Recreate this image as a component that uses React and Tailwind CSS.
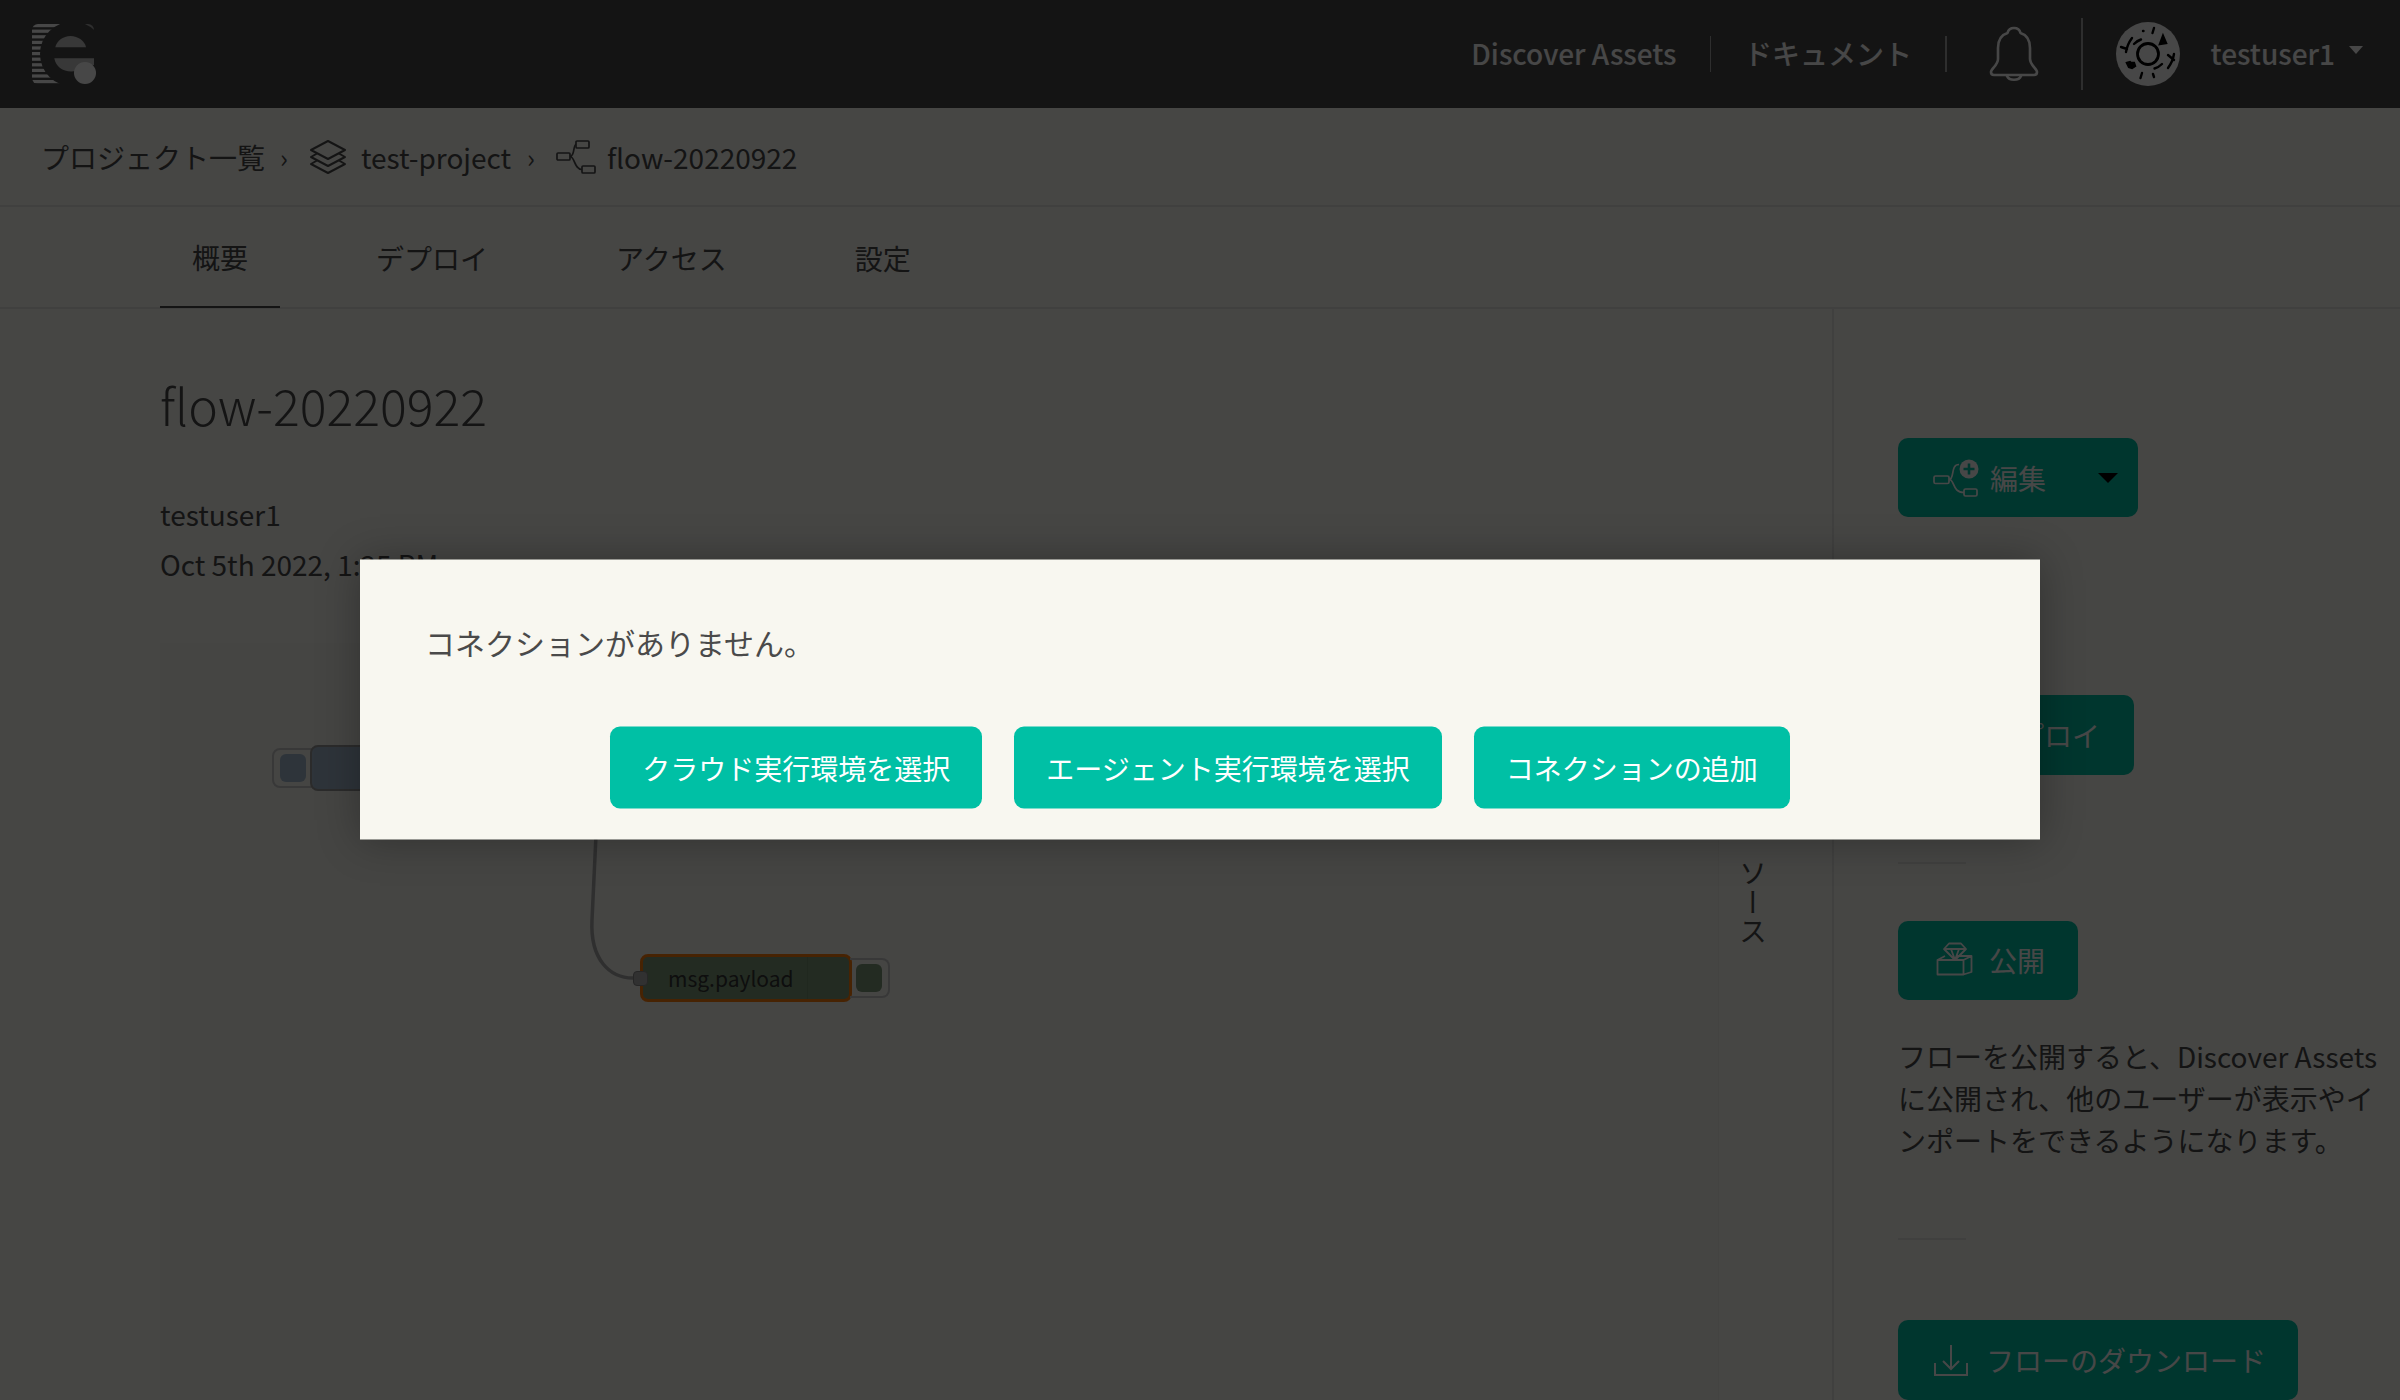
import React from "react";

function FlowIcon({ className }) {
  return (
    <svg className={className} viewBox="0 0 40 34" fill="none" stroke="currentColor" strokeWidth="1.700">
      <rect x="1" y="13" width="13" height="7" rx="1" />
      <rect x="20" y="1" width="13" height="7" rx="1" />
      <rect x="26" y="26" width="13" height="7" rx="1" />
      <path d="M14 16.500c5 0 3-12 6-12M14 16.500c5 0 4 13 12 13" />
    </svg>
  );
}

function LayersIcon({ className }) {
  return (
    <svg className={className} viewBox="0 0 38 36" fill="none" stroke="currentColor" strokeWidth="2" strokeLinejoin="round">
      <path d="M19 2 36 11 19 20 2 11Z" />
      <path d="M8 14.500 2 18l17 9 17-9-6-3.500" />
      <path d="M8 21.500 2 25l17 9 17-9-6-3.500" />
    </svg>
  );
}

function Logo() {
  const stripes = [24, 29.6, 35.2, 40.8, 46.4, 52, 57.6, 63.2, 68.8, 74.4, 80];
  return (
    <svg className="h-[64px] w-[68px]" viewBox="30 22 68 64">
      <defs>
        <clipPath id="logoClip">
          <rect x="32" y="24" width="62" height="60" rx="6" />
        </clipPath>
      </defs>
      <g clipPath="url(#logoClip)">
        {stripes.map((y) => (
          <rect key={y} x="32" y={y} width="40" height="3.2" fill="#fff" />
        ))}
        <rect x="78" y="24" width="16" height="14" fill="#a8a8a8" />
      </g>
      <circle cx="72.5" cy="54" r="32.5" fill="#4a4a4a" />
      <path d="M55.3 47.3C56.5 41 63 36 70.5 36s14.500 5 15.500 11.300Z" fill="#c8c8c8" />
      <path d="M54.300 58.300H94V65H85L76 71C65 73 56 68 54.300 58.300Z" fill="#c8c8c8" />
      <circle cx="85" cy="73" r="11" fill="#fff" />
    </svg>
  );
}

function Bell() {
  return (
    <svg className="h-[58px] w-[52px]" viewBox="0 0 52 58" fill="none" stroke="#fff" strokeWidth="2.6" strokeLinejoin="round" strokeLinecap="round">
      <path d="M26 3c-4 0-6 3-6.500 5C13 10 10 16 10 23v11c0 6-7 10-7 13 0 2 1 3 3 3h40c2 0 3-1 3-3 0-3-7-7-7-13V23c0-7-3-13-9.500-15C32 6 30 3 26 3Z" />
      <path d="M19 51c2 5 12 5 14 0" />
    </svg>
  );
}

function Avatar() {
  return (
    <svg className="h-[64px] w-[64px]" viewBox="0 0 64 64" fill="none" stroke="#000" strokeWidth="2.4" strokeLinecap="round">
      <circle cx="32" cy="32" r="32" fill="#fff" stroke="none" />
      <circle cx="32" cy="32" r="10.500" strokeWidth="2.800" />
      <path d="M18 22c2-2 4-3.500 7-4.500M46 42c-2 2-4 3.500-7.500 4.500" />
      <path d="M16 16c-3 4-5 8-6 14M5 25l6 2M58 32c-1 6-3 10-6 14M52 33l6 5" />
      <path d="M27 9h.5M38 6l-1.500 5M26 51l-1.500 5M37 52l1 3" />
      <path d="M47 14l-3 8 6-1Z" fill="#000" />
      <path d="M11 41l3-1 1 1 3 0 1 3-3 2-3-1Z" fill="#000" />
    </svg>
  );
}

function PrimaryButton({ children, className = "" }) {
  return (
    <button className={`flex h-[80px] items-center rounded-[10px] bg-[#00c0a5] text-white ${className}`}>
      {children}
    </button>
  );
}

export default function App() {
  return (
    <div className="relative h-screen w-screen overflow-hidden bg-[#f9f9f4] text-[28px] text-[#4a4a4a] [font-family:'Noto_Sans_CJK_JP','Noto_Sans',sans-serif]">
      <header className="flex h-[108px] items-center justify-between bg-[#4a4a4a] pl-[30px] pr-[37px] text-white">
        <Logo />
        <div className="flex items-center">
          <a className="mb-[3px] font-medium">Discover Assets</a>
          <span className="mx-[33px] h-[36px] w-[1.500px] bg-white/50" />
          <a className="mb-[3px] font-medium">ドキュメント</a>
          <span className="ml-[33px] mr-[41px] h-[36px] w-[1.500px] bg-white/50" />
          <Bell />
          <span className="ml-[41px] mr-[33px] h-[72px] w-[2px] bg-white/50" />
          <Avatar />
          <span className="mb-[3px] ml-[31px] font-medium">testuser1</span>
          <span className="mb-[8px] ml-[14px] h-0 w-0 border-x-[7.500px] border-t-[8px] border-x-transparent border-t-white" />
        </div>
      </header>

      <nav className="flex h-[99px] items-center border-b-2 border-[#e6e6e0] pl-[41px]">
        <a>プロジェクト一覧</a>
        <span className="ml-[15px] mr-[21px] text-[26px]">›</span>
        <LayersIcon className="h-[36px] w-[38px]" />
        <a className="ml-[14px]">test-project</a>
        <span className="ml-[16px] mr-[21px] text-[26px]">›</span>
        <FlowIcon className="h-[34px] w-[40px]" />
        <a className="ml-[11px]">flow-20220922</a>
      </nav>

      <div className="flex h-[102px] gap-[64px] border-b-2 border-[#e6e6e0] pl-[160px]">
        <a className="flex h-[101px] items-center border-b-2 border-[#4a4a4a] px-[32px]">概要</a>
        <a className="flex h-[101px] items-center px-[32px]">デプロイ</a>
        <a className="flex h-[101px] items-center px-[32px]">アクセス</a>
        <a className="flex h-[101px] items-center px-[32px]">設定</a>
      </div>

      <div className="flex h-[1091px]">
        <section className="flex w-[1834px] flex-col border-r-2 border-[#e6e6e0] pl-[160px]">
          <h1 className="mt-[59px] text-[50px] font-light leading-[72px]">flow-20220922</h1>
          <p className="mt-[49px] leading-[50px]">testuser1</p>
          <p className="leading-[50px]">Oct 5th 2022, 1:25 PM</p>
          <div className="mt-[54px] flex flex-1">
            <div className="relative w-[1558px] bg-[#f6f6f1]">
              <svg className="absolute inset-0 h-full w-full" fill="none">
                <path d="M438 150L432 277C430 317 450 335 473 335" stroke="#a8a8a8" strokeWidth="3.500" />
              </svg>
              <div className="absolute left-[112px] top-[105px] h-[40px] w-[50px] rounded-[8px] border-2 border-[#c8c8c8]">
                <div className="ml-[6px] mt-[4px] h-[28px] w-[26px] rounded-[6px] bg-[#a6bbcf]" />
              </div>
              <div className="absolute left-[150px] top-[102px] flex h-[46px] w-[300px] justify-end overflow-hidden rounded-[8px] border-2 border-[#999] bg-[#a6bbcf]" />
              <div className="absolute left-[480px] top-[311px] flex h-[48px] w-[212px] rounded-[8px] border-[3px] border-[#ff7f0e] bg-[#7f9a7a]">
                <span className="flex flex-1 items-center pl-[25px] text-[21px] leading-none text-[#333]">msg.payload</span>
                <span className="w-[42px] border-l border-[#74906f]" />
              </div>
              <div className="absolute left-[473px] top-[328px] h-[15px] w-[15px] rounded-[4px] border border-[#888] bg-[#b0b0b0]" />
              <div className="absolute left-[690px] top-[315px] h-[40px] w-[40px] rounded-r-[8px] border-2 border-l-0 border-[#c8c8c8]">
                <div className="ml-[6px] mt-[4px] h-[28px] w-[26px] rounded-[6px] bg-[#7f9a7a]" />
              </div>
            </div>
            <div className="flex flex-1 justify-start border-l border-[#f0f0ea] pl-[19px]">
              <span className="mt-[216px] leading-[29px] tracking-[1px] [writing-mode:vertical-rl]">ソース</span>
            </div>
          </div>
        </section>

        <aside className="flex flex-1 flex-col items-start pl-[64px]">
          <PrimaryButton className="mt-[129px] w-[240px] pl-[35px]">
            <svg className="h-[42px] w-[48px]" viewBox="0 0 48 42" fill="none" stroke="currentColor" strokeWidth="1.700">
              <rect x="1" y="19" width="15" height="7.500" rx="1.500" />
              <rect x="31" y="32" width="13" height="7" rx="1.500" />
              <path d="M16 22.500c6 0 1-15 10-15M16 22.500c6 0 3 13 15 13" />
              <circle cx="36" cy="12" r="9.500" fill="currentColor" stroke="none" />
              <path d="M36 6.500v11M30.500 12h11" stroke="#00c0a5" strokeWidth="2.600" />
            </svg>
            <span className="ml-[9px]">編集</span>
            <span className="ml-[52px] h-0 w-0 border-x-[10px] border-t-[10px] border-x-transparent border-t-black" />
          </PrimaryButton>

          <PrimaryButton className="mt-[178px] w-[236px] pl-[36px]">
            <FlowIcon className="h-[34px] w-[40px]" />
            <span className="ml-[14px]">デプロイ</span>
          </PrimaryButton>

          <div className="mt-[87px] h-[2px] w-[68px] bg-[#e6e6e0]" />

          <PrimaryButton className="mt-[57px] w-[180px] pl-[37px]">
            <svg className="h-[36px] w-[40px]" viewBox="0 0 40 36" fill="none" stroke="currentColor" strokeWidth="1.800" strokeLinejoin="round">
              <path d="M2.500 18 10 14M22 14h14.500l-8 4H2.500v14.500h26V18M36.500 14v16l-8 2.500" />
              <path d="M9 7l5-5.500h12L31 7 20 18ZM9 7h22M16 7l4 11 4-11" />
            </svg>
            <span className="ml-[14px]">公開</span>
          </PrimaryButton>

          <p className="mt-[35px] w-[490px] leading-[42px]">
            フローを公開すると、Discover Assetsに公開され、他のユーザーが表示やインポートをできるようになります。
          </p>

          <div className="mt-[77px] h-[2px] w-[68px] bg-[#e6e6e0]" />

          <PrimaryButton className="mt-[80px] w-[400px] shrink-0 pl-[36px]">
            <svg className="h-[32px] w-[34px]" viewBox="0 0 34 32" fill="none" stroke="currentColor" strokeWidth="2">
              <path d="M17 1v24M9 17l8 8 8-8M1 19v12h32V19" />
            </svg>
            <span className="ml-[18px]">フローのダウンロード</span>
          </PrimaryButton>
        </aside>
      </div>

      <div className="absolute inset-0 flex items-start justify-center bg-black/[0.72]">
        <div className="mt-[559px] h-[280px] w-[1680px] translate-y-[0.5px] bg-[#f8f7f0] px-[65px] pt-[58px] shadow-[0_0_40px_rgba(0,0,0,0.3)]">
          <p className="text-[30px] leading-[48px]">コネクションがありません。</p>
          <div className="mt-[61px] flex justify-center gap-[32px]">
            <button className="h-[82px] rounded-[10px] bg-[#00c0a5] px-[32px] text-white">クラウド実行環境を選択</button>
            <button className="h-[82px] rounded-[10px] bg-[#00c0a5] px-[32px] text-white">エージェント実行環境を選択</button>
            <button className="h-[82px] rounded-[10px] bg-[#00c0a5] px-[32px] text-white">コネクションの追加</button>
          </div>
        </div>
      </div>
    </div>
  );
}
